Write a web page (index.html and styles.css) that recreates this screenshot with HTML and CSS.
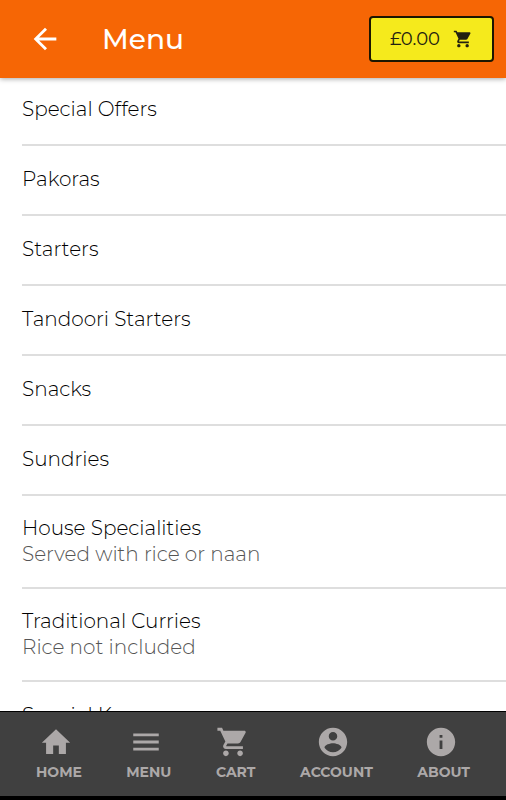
FILE: index.html
```html
<!DOCTYPE html>
<html lang="en">
<head>
  <meta charset="UTF-8">
  <title>Menu</title>
  <meta name="viewport" content="width=device-width, initial-scale=1.0">
  <link rel="stylesheet" href="styles.css">
</head>
<body>
  <header class="toolbar">
    <button class="back-btn" aria-label="Back">
      <svg viewBox="0 0 24 24"><path d="M20 11H7.83l5.59-5.59L12 4l-8 8 8 8 1.41-1.41L7.83 13H20v-2z"/></svg>
    </button>
    <h1>Menu</h1>
    <button class="basket-btn">
      <span>£0.00</span>
      <svg viewBox="0 0 24 24"><path d="M7 18c-1.1 0-1.99.9-1.99 2S5.9 22 7 22s2-.9 2-2-.9-2-2-2zM1 2v2h2l3.6 7.59-1.35 2.45c-.16.28-.25.61-.25.96 0 1.1.9 2 2 2h12v-2H7.42c-.14 0-.25-.11-.25-.25l.03-.12.9-1.63h7.45c.75 0 1.41-.41 1.75-1.03l3.58-6.49c.08-.14.12-.31.12-.48 0-.55-.45-1-1-1H5.21l-.94-2H1zm16 16c-1.1 0-1.99.9-1.99 2s.89 2 1.99 2 2-.9 2-2-.9-2-2-2z"/></svg>
    </button>
  </header>

  <main class="content">
    <ul class="menu-list">
      <li><h2>Special Offers</h2></li>
      <li><h2>Pakoras</h2></li>
      <li><h2>Starters</h2></li>
      <li><h2>Tandoori Starters</h2></li>
      <li><h2>Snacks</h2></li>
      <li><h2>Sundries</h2></li>
      <li>
        <h2>House Specialities</h2>
        <p>Served with rice or naan</p>
      </li>
      <li>
        <h2>Traditional Curries</h2>
        <p>Rice not included</p>
      </li>
      <li><h2>Special Kormas</h2></li>
    </ul>
  </main>

  <nav class="tabs">
    <a href="#home">
      <svg viewBox="0 0 24 24"><path d="M10 20.500v-6h4v6h5v-8h3L12 3 2 12.500h3v8z"/></svg>
      <span>HOME</span>
    </a>
    <a href="#menu">
      <svg viewBox="0 0 24 24"><path d="M3 18h18v-2H3v2zm0-5h18v-2H3v2zm0-7v2h18V6H3z"/></svg>
      <span>MENU</span>
    </a>
    <a href="#cart">
      <svg viewBox="0 0 24 24"><path d="M7 18c-1.1 0-1.99.9-1.99 2S5.9 22 7 22s2-.9 2-2-.9-2-2-2zM1 2v2h2l3.6 7.59-1.35 2.45c-.16.28-.25.61-.25.96 0 1.1.9 2 2 2h12v-2H7.42c-.14 0-.25-.11-.25-.25l.03-.12.9-1.63h7.45c.75 0 1.41-.41 1.75-1.03l3.58-6.49c.08-.14.12-.31.12-.48 0-.55-.45-1-1-1H5.21l-.94-2H1zm16 16c-1.1 0-1.99.9-1.99 2s.89 2 1.99 2 2-.9 2-2-.9-2-2-2z"/></svg>
      <span>CART</span>
    </a>
    <a href="#account">
      <svg viewBox="0 0 24 24"><path d="M12 2C6.480 2 2 6.480 2 12s4.480 10 10 10 10-4.480 10-10S17.520 2 12 2zm0 3c1.660 0 3 1.340 3 3s-1.340 3-3 3-3-1.340-3-3 1.340-3 3-3zm0 14.200c-2.500 0-4.710-1.280-6-3.220.03-1.990 4-3.080 6-3.080 1.990 0 5.970 1.090 6 3.080-1.290 1.940-3.500 3.220-6 3.220z"/></svg>
      <span>ACCOUNT</span>
    </a>
    <a href="#about">
      <svg viewBox="0 0 24 24"><path d="M12 2C6.480 2 2 6.480 2 12s4.480 10 10 10 10-4.480 10-10S17.520 2 12 2zm1 15h-2v-6h2v6zm0-8h-2V7h2v2z"/></svg>
      <span>ABOUT</span>
    </a>
  </nav>
</body>
</html>
```
FILE: styles.css
```css
* {
  margin: 0;
  padding: 0;
  box-sizing: border-box;
}

body {
  font-family: Montserrat, Inter, sans-serif;
  background: #fff;
  color: #000;
  height: 100vh;
  display: flex;
  flex-direction: column;
}

svg {
  display: block;
  fill: currentColor;
}

button {
  font-family: inherit;
  cursor: pointer;
}

/* top bar */
.toolbar {
  position: relative;
  z-index: 1;
  display: flex;
  align-items: center;
  height: 78px;
  padding: 0 12px 0 28px;
  background: #f66605;
  color: #fff;
  box-shadow: 0 1px 5px rgba(0, 0, 0, 0.35);
}

.back-btn {
  background: none;
  border: none;
  color: inherit;
}

.back-btn svg {
  width: 34px;
  height: 34px;
}

.toolbar h1 {
  flex: 1;
  margin-left: 40px;
  font-size: 28px;
  font-weight: 500;
}

.basket-btn {
  display: flex;
  align-items: center;
  gap: 13px;
  height: 46px;
  padding: 0 19px;
  border: 2px solid #1c1600;
  border-radius: 4px;
  background: #f5ea1c;
  color: #222010;
  font-size: 18px;
}

.basket-btn svg {
  width: 20px;
  height: 20px;
}

/* categories */
.content {
  flex: 1;
  min-height: 0;
  overflow-y: auto;
  scrollbar-width: none;
}

.menu-list {
  margin-top: -2px;
  padding-left: 22px;
  list-style: none;
}

.menu-list li {
  padding: 20px 0 22px;
  border-bottom: 2px solid #dedede;
}

.menu-list li:has(p) {
  padding: 19px 0 20px;
}

.menu-list h2,
.menu-list p {
  font-size: 20px;
  font-weight: 300;
  line-height: 26px;
}

.menu-list p {
  color: #555;
}

/* bottom tabs */
.tabs {
  display: flex;
  justify-content: space-between;
  height: 89px;
  padding: 13px 36px 0;
  background: #404040;
  border-top: 1px solid #000;
  border-bottom: 4px solid #000;
}

.tabs a {
  display: flex;
  flex-direction: column;
  align-items: center;
  color: #aca8a8;
  font-size: 14px;
  font-weight: 700;
  line-height: 26px;
  text-decoration: none;
}

.tabs svg {
  width: 34px;
  height: 34px;
  margin-right: 6px;
}
```
